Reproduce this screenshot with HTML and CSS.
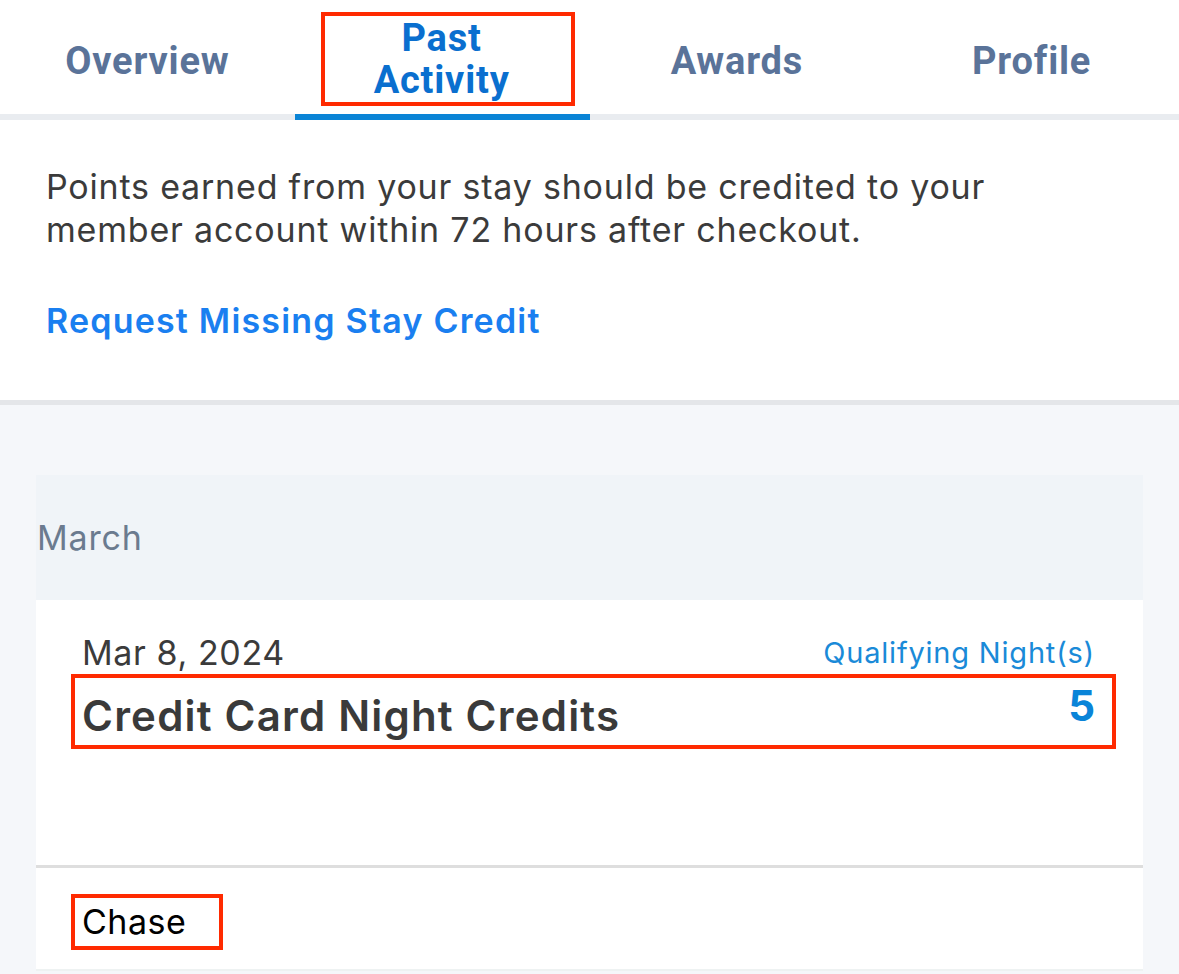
FILE: index.html
```html
<!DOCTYPE html>
<html lang="en">
<head>
  <meta charset="UTF-8">
  <title>Past Activity</title>
  <link rel="stylesheet" href="styles.css">
</head>
<body>
  <nav class="tabs">
    <a href="#" class="tab">Overview</a>
    <a href="#" class="tab active"><span class="mark tab-mark">Past<br>Activity</span></a>
    <a href="#" class="tab">Awards</a>
    <a href="#" class="tab">Profile</a>
  </nav>

  <section class="info">
    <p class="note">Points earned from your stay should be credited to your<br>member account within 72 hours after checkout.</p>
    <a href="#" class="request">Request Missing Stay Credit</a>
  </section>

  <main class="activity">
    <div class="card">
      <div class="month">March</div>
      <div class="entry">
        <div class="entry-top">
          <span class="date">Mar 8, 2024</span>
          <span class="kind">Qualifying Night(s)</span>
        </div>
        <div class="mark entry-row">
          <span class="title">Credit Card Night Credits</span>
          <span class="count">5</span>
        </div>
      </div>
      <div class="entry-foot">
        <span class="mark partner">Chase</span>
      </div>
    </div>
  </main>
</body>
</html>
```

FILE: styles.css
```css
body {
  margin: 0;
  font-family: "Inter", "Roboto", sans-serif;
  background-color: #f5f7fa;
  color: #3b3b3b;
}
/* tabs */
.tabs {
  display: grid;
  grid-template-columns: repeat(4, minmax(0, 1fr));
  height: 114px;
  background-color: #fff;
  border-bottom: 6px solid #e9ecf0;
}
.tab {
  display: flex;
  align-items: center;
  justify-content: center;
  font-family: "Roboto", sans-serif;
  font-size: 38px;
  font-weight: bold;
  letter-spacing: 0.8px;
  color: #5a7399;
  text-decoration: none;
  padding-top: 8px;
}
.tab.active {
  color: #0a6fcf;
  border-bottom: 6px solid #0a84d6;
  margin-bottom: -6px;
  padding-top: 0;
}
.mark {
  border: 4px solid #ff2a00;
  box-sizing: border-box;
}
.tab-mark {
  display: block;
  flex: none;
  width: 254px;
  height: 94px;
  margin-left: 11px;
  margin-top: 4px;
  text-align: center;
  line-height: 42px;
  padding-top: 1px;
  padding-right: 12px;
}
/* info */
.info {
  background-color: #fff;
  padding: 45px 46px 58px;
  border-bottom: 5px solid #e4e6e9;
}
.note {
  margin: 0;
  font-size: 34px;
  letter-spacing: 0.8px;
  line-height: 43px;
}
.request {
  display: block;
  margin-top: 48px;
  font-size: 34px;
  letter-spacing: 1.2px;
  line-height: 43px;
  font-weight: 600;
  color: #1a7ff0;
  text-decoration: none;
}
/* activity list */
.activity {
  padding: 70px 36px 0;
}
.card {
  background-color: #fff;
  border-bottom: 2px solid #eef2f2;
}
.month {
  height: 125px;
  display: flex;
  align-items: center;
  padding-left: 1px;
  background-color: #f0f4f8;
  color: #6b7b8f;
  font-size: 34px;
  letter-spacing: 0.8px;
}
.entry {
  padding: 32px 48px 116px 35px;
  border-bottom: 3px solid #dedede;
}
.entry-top {
  display: flex;
  justify-content: space-between;
  align-items: center;
  padding-left: 11px;
  height: 40px;
}
.date {
  font-size: 34px;
  letter-spacing: 0.6px;
}
.kind {
  font-size: 29px;
  letter-spacing: 0.8px;
  color: #1a8ad8;
}
.entry-row {
  display: flex;
  justify-content: space-between;
  margin-top: 2px;
  margin-right: -21px;
  padding: 14px 17px 5px 7px;
}
.title {
  font-size: 42px;
  letter-spacing: 1.2px;
  line-height: 48px;
  font-weight: 600;
  color: #3a3a3a;
}
.count {
  font-size: 42px;
  line-height: 48px;
  font-weight: bold;
  color: #0a84d8;
  margin-top: -10px;
}
.entry-foot {
  padding: 26px 35px 19px;
}
.partner {
  display: block;
  width: 152px;
  height: 56px;
  padding-left: 7px;
  font-size: 34px;
  letter-spacing: 0.5px;
  line-height: 48px;
  color: #000;
}
```
